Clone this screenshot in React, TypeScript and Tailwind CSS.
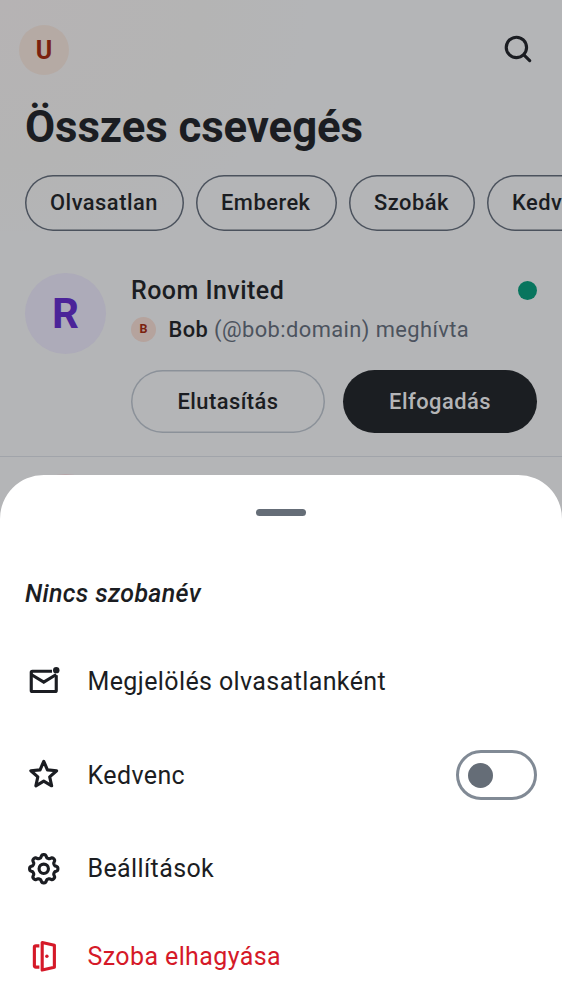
import React from "react";

const INK = "#1b1d22";

function SearchIcon() {
  return (
    <svg viewBox="0 0 24 24" className="size-[37.5px]" fill={INK} aria-hidden="true">
      <path d="M15.05 16.463a7.5 7.5 0 1 1 1.414-1.414l3.243 3.244a1 1 0 0 1-1.414 1.414zM16 10.5a5.5 5.5 0 1 0-11 0 5.5 5.5 0 0 0 11 0" fillRule="evenodd" />
    </svg>
  );
}

function UnreadIcon() {
  return (
    <svg viewBox="0 0 24 24" className="size-[37.5px]" fill="none" stroke={INK} strokeWidth="2" strokeLinejoin="round" aria-hidden="true">
      <path d="M17.300 5.900H4.700Q4 5.900 4 6.600V18.200Q4 18.900 4.700 18.900H19.300Q20 18.900 20 18.200V8.500" />
      <path d="M4 8l8 4.900 8-4.900" strokeLinejoin="miter" />
      <circle cx="20" cy="5.200" r="2.050" fill={INK} stroke="none" />
    </svg>
  );
}

function StarIcon() {
  return (
    <svg viewBox="0 0 24 24" className="size-[37.5px]" fill="none" stroke={INK} strokeWidth="2" strokeLinejoin="round" aria-hidden="true">
      <path d="M12 3.400L14.350 8.860L20.250 9.440L15.800 13.340L17.050 19.060L12 16.100L6.950 19.060L8.200 13.340L3.750 9.440L9.650 8.860Z" />
    </svg>
  );
}

const gearPath =
  Array.from({ length: 193 }, (_, i) => {
    const t = (i / 192) * Math.PI * 2;
    const r = 8.1 + (0.95 * Math.tanh(1.7 * Math.cos(8 * t))) / Math.tanh(1.7);
    return `${i ? "L" : "M"}${(12 + r * Math.sin(t)).toFixed(2)} ${(12 - r * Math.cos(t)).toFixed(2)}`;
  }).join("") + "Z";

function SettingsIcon() {
  return (
    <svg viewBox="0 0 24 24" className="size-[37.5px]" fill="none" stroke={INK} strokeWidth="2" strokeLinejoin="round" aria-hidden="true">
      <path d={gearPath} />
      <circle cx="12" cy="12" r="3" />
    </svg>
  );
}

function LeaveIcon() {
  return (
    <svg viewBox="0 0 24 24" className="size-[37.5px]" fill="none" stroke="#d51928" strokeWidth="2" strokeLinejoin="round" aria-hidden="true">
      <path d="M11 2.900L18.800 4.700v14l-7.800 1.800z" />
      <path d="M9.200 5H7Q6 5 6 5.800V17.800Q6 18.600 7 18.600H9.200" />
      <circle cx="14" cy="11.700" r="1.100" fill="#d51928" stroke="none" />
    </svg>
  );
}

function Chip({ label, width }: { label: string; width: string }) {
  return (
    <div className={`flex h-14 shrink-0 items-center pt-px pl-[25px] text-[21.875px] font-medium tracking-[0.5px] whitespace-nowrap rounded-full shadow-[inset_0_0_0_1.5px_#4b525d] ${width}`}>
      {label}
    </div>
  );
}

function MenuRow({ icon, label, className, children }: { icon: React.ReactNode; label: string; className: string; children?: React.ReactNode }) {
  return (
    <div className={`flex items-center px-[25px] ${className}`}>
      {icon}
      <span className="ml-[25px] flex-1 pt-px text-[25px] leading-[37.5px] tracking-[0.39px]">{label}</span>
      {children}
    </div>
  );
}

export default function App() {
  return (
    <div className="relative h-[1000px] w-[562px] overflow-hidden bg-[#b4b5b7] font-[Roboto,sans-serif] text-[#1b1d22]">
      <div className="bg-[radial-gradient(ellipse_310px_250px_at_0_0,#b6b3b4_0%,#b4b4b4_65%,#b4b5b7_100%)]">
        <header className="flex h-[100px] items-center justify-between pr-[25px] pl-[19px]">
          <div className="flex size-[50px] items-center justify-center rounded-full bg-[#b5aaa4] pt-px text-[25px] font-bold text-[#7b210e]">U</div>
          <SearchIcon />
        </header>
        <h1 className="h-[75px] pl-[25px] text-[43.75px] leading-[54px] font-bold tracking-[-0.08px]">Összes csevegés</h1>
        <nav className="flex gap-3 overflow-hidden pl-[25px]">
          <Chip label="Olvasatlan" width="w-[159px]" />
          <Chip label="Emberek" width="w-[141px]" />
          <Chip label="Szobák" width="w-[126px]" />
          <Chip label="Kedvencek" width="w-[155px]" />
        </nav>
      </div>

      <section className="mt-[25px] flex h-[201px] border-b border-[#a1a4aa] px-[25px] pt-[17px]">
        <div className="mt-[0.4px] flex size-[81px] shrink-0 items-center justify-center rounded-full bg-[#adabb9] text-[42px] font-bold text-[#4b2399]">R</div>
        <div className="ml-[25px] flex-1">
          <div className="flex h-[35px] items-center justify-between">
            <span className="text-[25px] font-medium tracking-[0.46px]">Room Invited</span>
            <span className="size-[19px] rounded-full bg-[#08755e]" />
          </div>
          <div className="mt-1 flex h-[34px] items-center">
            <span className="flex size-[25px] items-center justify-center rounded-full bg-[#b5a39d] pt-px text-[12.5px] font-bold text-[#7b210e]">B</span>
            <p className="ml-[12.5px] pt-0.5 text-[21.875px] tracking-[0.42px] whitespace-nowrap text-[#4c535e]">
              <span className="font-medium text-[#1b1d22]">Bob</span> (@bob:domain) meghívta
            </p>
          </div>
          <div className="mt-6 flex gap-[18px] text-[21.875px] font-medium tracking-[0.47px]">
            <button className="h-[63px] w-[194px] rounded-full pt-0.5 shadow-[inset_0_0_0_1.5px_#8b9199]">Elutasítás</button>
            <button className="h-[63px] w-[194px] rounded-full bg-[#1b1e22] pt-0.5 text-[#b4b5b7]">Elfogadás</button>
          </div>
        </div>
      </section>
      <div className="mx-[25px] mt-[17.4px] size-[81px] rounded-full bg-[#b6a5a8]" />

      <div className="absolute inset-x-0 top-[475px] h-[525px] rounded-t-[43.75px] bg-white text-[#1b1d22]">
        <div className="flex h-[75px] justify-center pt-[34px]">
          <span className="h-[7px] w-[50px] rounded-full bg-[#656d77]" />
        </div>
        <h2 className="flex h-[87px] items-center pl-[25px] text-[25px] font-medium tracking-[0.33px] italic">Nincs szobanév</h2>
        <MenuRow className="h-[88px]" icon={<UnreadIcon />} label="Megjelölés olvasatlanként" />
        <MenuRow className="h-[100px]" icon={<StarIcon />} label="Kedvenc">
          <span className="flex h-[50px] w-[81px] items-center rounded-full border-3 border-[#818a95] pl-[9px]">
            <span className="size-[25px] rounded-full bg-[#656d77]" />
          </span>
        </MenuRow>
        <MenuRow className="h-[87px]" icon={<SettingsIcon />} label="Beállítások" />
        <MenuRow className="h-[88px] pt-px text-[#d51928]" icon={<LeaveIcon />} label="Szoba elhagyása" />
      </div>
    </div>
  );
}
